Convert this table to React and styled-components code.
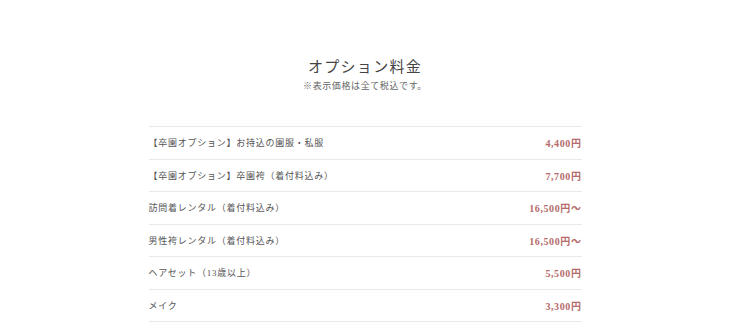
import React from "react";
import styled, { createGlobalStyle } from "styled-components";

const GlobalStyle = createGlobalStyle`
  body {
    margin: 0;
    background: #fff;
    font-family: "Liberation Serif", "Noto Sans CJK JP", serif;
    color: #555;
  }
`;

const Page = styled.div`
  width: 730px;
  padding-top: 57px;
`;

const Section = styled.section`
  width: 433px;
  margin: 0 auto;
`;

const Heading = styled.header`
  text-align: center;
  margin-bottom: 33px;
`;

const Title = styled.h2`
  margin: 0;
  font-size: 15px;
  font-weight: 400;
  letter-spacing: 1.3px;
  line-height: 20px;
  color: #444;
`;

const Note = styled.p`
  margin: 2px 0 0;
  font-size: 9px;
  letter-spacing: 0.6px;
  line-height: 14px;
  color: #666;
`;

const List = styled.ul`
  list-style: none;
  margin: 0;
  padding: 0;
  border-top: 1px solid #e9e9e9;
`;

const Row = styled.li`
  display: flex;
  justify-content: space-between;
  align-items: center;
  height: 31.5px;
  border-bottom: 1px solid #e9e9e9;
  font-size: 9px;
  letter-spacing: 0.75px;
`;

const Name = styled.span`
  color: #555;
`;

const Price = styled.span`
  color: #b56b6b;
  font-weight: 700;
  font-size: 10px;
  letter-spacing: 0.6px;
`;

const options = [
  ["【卒園オプション】お持込の園服・私服", "4,400円"],
  ["【卒園オプション】卒園袴（着付料込み）", "7,700円"],
  ["訪問着レンタル（着付料込み）", "16,500円〜"],
  ["男性袴レンタル（着付料込み）", "16,500円〜"],
  ["ヘアセット（13歳以上）", "5,500円"],
  ["メイク", "3,300円"],
];

export default function App() {
  return (
    <Page>
      <GlobalStyle />
      <Section>
        <Heading>
          <Title>オプション料金</Title>
          <Note>※表示価格は全て税込です。</Note>
        </Heading>
        <List>
          {options.map(([name, price]) => (
            <Row key={name}>
              <Name>{name}</Name>
              <Price>{price}</Price>
            </Row>
          ))}
        </List>
      </Section>
    </Page>
  );
}
